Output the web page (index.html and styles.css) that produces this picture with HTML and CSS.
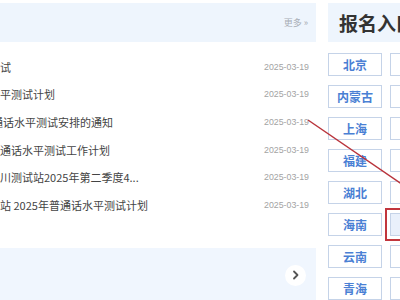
FILE: index.html
```html
<!DOCTYPE html>
<html lang="zh-CN">
<head>
<meta charset="utf-8">
<title>报名入口</title>
<link rel="stylesheet" href="styles.css">
</head>
<body>
<div class="page">
  <section class="news">
    <div class="news-head"><a class="more">更多 »</a></div>
    <ul class="news-list">
      <li><span class="t">试</span><span class="d">2025-03-19</span></li>
      <li><span class="t">平测试计划</span><span class="d">2025-03-19</span></li>
      <li><span class="t clip">通话水平测试安排的通知</span><span class="d">2025-03-19</span></li>
      <li><span class="t">通话水平测试工作计划</span><span class="d">2025-03-19</span></li>
      <li><span class="t">川测试站2025年第二季度4...</span><span class="d">2025-03-19</span></li>
      <li><span class="t">站 2025年普通话水平测试计划</span><span class="d">2025-03-19</span></li>
    </ul>
    <div class="news-foot">
      <span class="next"><svg width="10" height="10" viewBox="0 0 10 10"><path d="M3 1.5 L6.5 5 L3 8.5" fill="none" stroke="#555" stroke-width="1.8" stroke-linecap="round" stroke-linejoin="round"/></svg></span>
    </div>
  </section>
  <section class="entry">
    <div class="entry-head"><h2>报名入口</h2></div>
    <div class="grid">
      <a class="btn">北京</a><a class="btn">天津</a><a class="btn">河北</a>
      <a class="btn">内蒙古</a><a class="btn">辽宁</a><a class="btn">吉林</a>
      <a class="btn">上海</a><a class="btn">江苏</a><a class="btn">浙江</a>
      <a class="btn">福建</a><a class="btn">江西</a><a class="btn">山东</a>
      <a class="btn">湖北</a><a class="btn">湖南</a><a class="btn">广东</a>
      <a class="btn">海南</a><a class="btn active">重庆</a><a class="btn">四川</a>
      <a class="btn">云南</a><a class="btn">西藏</a><a class="btn">陕西</a>
      <a class="btn">青海</a><a class="btn">宁夏</a><a class="btn">新疆</a>
    </div>
  </section>
  <svg class="annot" width="400" height="300" viewBox="0 0 400 300"><line x1="308" y1="120" x2="412" y2="191" stroke="#b9343c" stroke-width="1.5"/></svg>
</div>
</body>
</html>
```
FILE: styles.css
```css
html, body {
  margin: 0;
  padding: 0;
  background: #fff;
  overflow: hidden;
}
body {
  font-family: "Noto Sans CJK SC", "Noto Sans", sans-serif;
}
.page {
  position: relative;
  display: flex;
  gap: 12px;
  padding-top: 3px;
  width: 600px;
  height: 297px;
}
.news {
  flex: none;
  width: 316px;
  display: flex;
  flex-direction: column;
}
.news-head {
  height: 39px;
  background: #eef5fd;
  display: flex;
  align-items: center;
  justify-content: flex-end;
  padding-right: 8px;
}
.more {
  font-size: 9px;
  color: #a8adb5;
}
.news-list {
  list-style: none;
  margin: 0;
  padding: 11px 7px 0 0;
  height: 195px;
  overflow: hidden;
}
.news-list li {
  height: 27.6px;
  display: flex;
  align-items: center;
  justify-content: space-between;
}
.t {
  font-size: 11px;
  color: #444;
  white-space: nowrap;
}
.t.clip {
  margin-left: -8px;
}
.d {
  font-family: "Liberation Sans", sans-serif;
  font-size: 8.8px;
  color: #a3a3a3;
}
.news-foot {
  flex: 1;
  background: #f0f6fe;
  display: flex;
  align-items: center;
  justify-content: flex-end;
  padding: 0 10px 0 0;
}
.next {
  width: 21px;
  height: 21px;
  border-radius: 50%;
  background: #fff;
  display: flex;
  align-items: center;
  justify-content: center;
  margin-top: 2px;
}
.entry {
  flex: none;
  width: 200px;
}
.entry-head {
  height: 39px;
  background: #eef5fd;
  display: flex;
  align-items: center;
  padding-left: 11px;
}
.entry-head h2 {
  margin: 0;
  font-size: 19px;
  font-weight: bold;
  color: #333;
  letter-spacing: 0;
}
.grid {
  display: grid;
  grid-template-columns: 54px 54px 54px;
  column-gap: 8px;
  row-gap: 9px;
  margin-top: 11px;
}
.btn {
  box-sizing: border-box;
  height: 23px;
  border: 1px solid #c5d3e8;
  background: #fff;
  color: #4a80d4;
  font-size: 12px;
  font-weight: bold;
  display: flex;
  align-items: center;
  justify-content: center;
}
.btn.active {
  background: #e9f0fb;
  outline: 2px solid #c2363d;
  outline-offset: 3px;
}
.annot {
  position: absolute;
  left: 0;
  top: 0;
  pointer-events: none;
}
```
